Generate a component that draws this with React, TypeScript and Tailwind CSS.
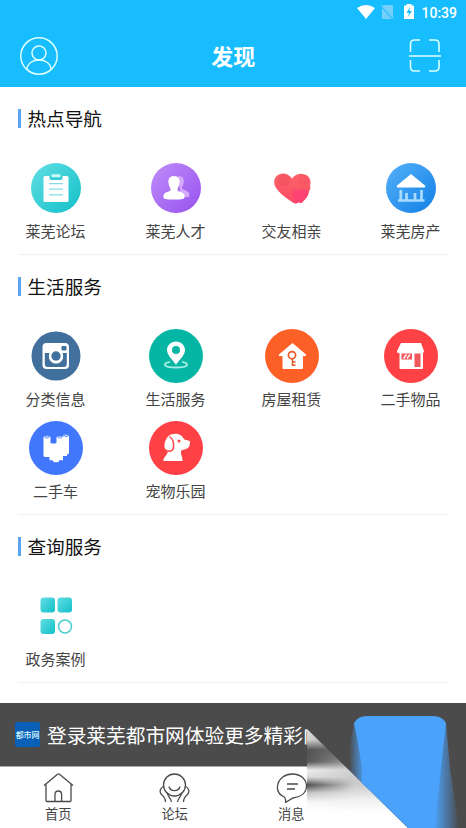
import type { ReactNode } from 'react';

type Item = { label: string; icon: ReactNode };

function Disc({ color, children, r = 27 }: { color: string; children: ReactNode; r?: number }) {
  return (
    <svg viewBox="0 0 56 56" className="size-14 shrink-0">
      <circle cx="28" cy="28" r={r} fill={color} />
      {children}
    </svg>
  );
}

const hot: Item[] = [
  {
    label: '莱芜论坛',
    icon: (
      <Disc color="url(#teal)" r={25}>
        <rect x="15.500" y="16" width="25" height="26" rx="1.500" fill="#fff" />
        <path d="M21.500 16v2q0 2 2 2h9q2 0 2-2v-2z" fill="#38cdd6" />
        <rect x="23.500" y="14.300" width="9" height="3" rx="1" fill="#c8fbfb" />
        <path d="M21 23.700h14M21 29.200h14M21 34.800h14" stroke="#85dfe2" strokeWidth="1.200" />
      </Disc>
    ),
  },
  {
    label: '莱芜人才',
    icon: (
      <Disc color="url(#violet)" r={25}>
        <path d="M30 16c6 0 7 4 5 9-2 4-1 4 2 5 4 2 5 3 4 7h-8z" fill="#d3a9fb" />
        <path d="M26 16c4.500 0 6 3 5.500 7-.3 3-1.500 4-2 6-.3 2 1 2 3.500 3 3 1.300 4 3 3.500 5.500-.3 1.500-2 2-10.500 2s-10-.5-10.500-2c-.5-2.500.5-4.200 3.500-5.500 2.500-1 3.800-1 3.500-3-.5-2-1.700-3-2-6-.5-4 1-7 5.500-7z" fill="#fff" />
      </Disc>
    ),
  },
  {
    label: '交友相亲',
    icon: (
      <svg viewBox="0 0 56 56" className="size-14 shrink-0">
        <path d="M28 18.500c4-6 12-6 16-2 3 3 3 6 2 9 .8 2 .2 4.500-1 6-.5 5-4 8.500-8 12l-2-1.500-2.500 1.500h-2C23 39 15 33 11.500 27c-2-4-1.800-8 1-11 4-4 11.500-3.500 15.500 2.500z" fill="url(#heart)" />
        <circle cx="20" cy="20" r="6" fill="#ea4358" opacity=".35" />
        <circle cx="39.500" cy="20.500" r="6" fill="#fa5265" opacity=".5" />
        <path d="M36 31c-3-3-8-.5-7.500 4 .3 4 3.500 6 6 8 4-2 8.500-5 10-11-3-3.500-7-3.500-8.500-1z" fill="#fd3f79" opacity=".75" />
      </svg>
    ),
  },
  {
    label: '莱芜房产',
    icon: (
      <Disc color="url(#blue)" r={25}>
        <path d="M28 14 42 25.500q1 2-1.500 2h-25q-2.500 0-1.500-2z" fill="#fff" />
        <path d="M17.800 30v10M23.500 33v7M32 33v7M38.500 30v10" stroke="#a7daff" strokeWidth="2.800" />
        <path d="M15 40.500h26.500" stroke="#a7daff" strokeWidth="2.500" />
      </Disc>
    ),
  },
];

const life: Item[] = [
  {
    label: '分类信息',
    icon: (
      <Disc color="#40709b" r={24.5}>
        <rect x="14.500" y="15" width="26.500" height="26" rx="4" fill="#fff" />
        <path d="M16.800 25h5.200a7 7 0 1 0 12 0h4.800v11q0 3-3 3h-16q-3 0-3-3z" fill="#40709b" />
        <circle cx="28" cy="28" r="7.200" fill="#fff" />
        <circle cx="28" cy="28" r="4.700" fill="#40709b" />
        <rect x="33.500" y="18" width="5" height="4.500" rx="1" fill="#40709b" />
      </Disc>
    ),
  },
  {
    label: '生活服务',
    icon: (
      <Disc color="#06b6a5">
        <path d="M28 13.500c-5 0-9 3.700-9 8.500 0 5.500 6.500 10.500 9 15 2.500-4.500 9-9.500 9-15 0-4.800-4-8.500-9-8.500zm0 4.500a4 4 0 1 1 0 8 4 4 0 0 1 0-8z" fill="#fff" fillRule="evenodd" />
        <path d="M22 33.800c-8 1.500-7 5.700 6 5.700s14-4.200 6-5.700" fill="none" stroke="#a5eee5" strokeWidth="1.800" />
      </Disc>
    ),
  },
  {
    label: '房屋租赁',
    icon: (
      <Disc color="#fd6026">
        <path d="M28.500 15 42 26.500q.5 1.500-1 1.500h-2v12q0 1-1 1H19.500q-1 0-1-1V28H16q-2 0-1-1.500z" fill="#fff" />
        <circle cx="28" cy="27.200" r="3.600" fill="none" stroke="#e45a2b" strokeWidth="1.700" />
        <path d="M28.500 31v7M29 34h2.500M29 37.300h2.500" stroke="#e45a2b" strokeWidth="1.500" />
      </Disc>
    ),
  },
  {
    label: '二手物品',
    icon: (
      <Disc color="#fd4144">
        <path d="M18 15h20l3 8q0 2-1.500 2h-24q-2 0-1.500-2z" fill="#fff" />
        <rect x="16.500" y="23" width="23.500" height="18" rx="1" fill="#fff" />
        <path d="M18.500 25.500H29v6H18.500zM31.500 25.500h6V39h-6z" fill="#f2575a" />
        <path d="m20.500 30.500 3-4M24 30.500l3-4" stroke="#fff" strokeWidth="1.300" />
      </Disc>
    ),
  },
  {
    label: '二手车',
    icon: (
      <Disc color="#4077fd">
        <path d="M15.500 17v18.500q0 1.500 2.500 1.500h3.500v3.300h3.200q0 2 3.300 2t3.300-2H35V36h4V34.500q2-.3 2-1.500V16q-2-2.200-5.500-1v2q-3-2-7 0v6q-3 1-6 0V17q-3-3-7 0z" fill="#fff" />
        <g fill="none" stroke="#4077fd" strokeWidth=".8">
          <ellipse cx="19" cy="17" rx="2.200" ry="1" />
          <ellipse cx="31.700" cy="17" rx="2.200" ry="1" />
          <ellipse cx="38.200" cy="15.700" rx="1.800" ry=".9" />
          <ellipse cx="25.500" cy="20.500" rx="2.200" ry="1.200" />
        </g>
      </Disc>
    ),
  },
  {
    label: '宠物乐园',
    icon: (
      <Disc color="#fd4144">
        <path d="M20.500 16c4.500-3.800 13-3 15 2.500 1.500 2.300 6 1.500 6.500 3 0 2-.5 4.500-1.500 6-2.500 2.500-7 1.500-7.500 4-.3 4 2 5.500 1.500 9.500h-19c-.8-3 3-5 4-8 .7-2-1.500-2.500-2.500-4.500-1.500-3 0-9 3.500-12.500z" fill="#fff" />
        <path d="M21.500 16.500c3.500 2.500 4.500 7 4 11-.5 4-5 4.500-7.500 2.500" fill="none" stroke="#fd4144" strokeWidth="1.500" />
        <circle cx="31" cy="21" r="1.500" fill="#fd4144" />
      </Disc>
    ),
  },
];

const query: Item[] = [
  {
    label: '政务案例',
    icon: (
      <svg viewBox="0 0 56 56" className="size-14 shrink-0">
        <rect x="12.500" y="9.500" width="14.500" height="15" rx="3" fill="url(#teal)" />
        <rect x="29.500" y="9.500" width="14.500" height="15" rx="3" fill="url(#teal)" />
        <rect x="12.500" y="31" width="14.500" height="15" rx="3" fill="url(#teal)" />
        <circle cx="37" cy="38.500" r="6.500" fill="none" stroke="#49cfce" strokeWidth="1.500" />
      </svg>
    ),
  },
];

function Section({ title, items, spacing }: { title: string; items: Item[]; spacing: string }) {
  return (
    <section className={`mx-[18px] border-b border-[#f1f1f1] ${spacing}`}>
      <div className="flex h-[28px] items-center">
        <span className="h-[19px] w-[2.500px] bg-[#5aa5ee]" />
        <h2 className="ml-[7px] text-[18.600px] leading-7 text-[#111]">{title}</h2>
      </div>
      <div className="mr-[7px] ml-[7px] mt-[28px] grid grid-cols-[120px_116px_119px_60px] gap-y-2">
        {items.map((item) => (
          <div key={item.label} className="flex h-[84px] w-[61px] flex-col items-center">
            {item.icon}
            <span className="mt-1 text-[15px] leading-[22px] whitespace-nowrap text-[#444]">{item.label}</span>
          </div>
        ))}
      </div>
    </section>
  );
}

function Gradients() {
  return (
    <svg className="absolute size-0">
      <defs>
        <linearGradient id="teal" x2="1" y2="1"><stop stopColor="#61dfe4" /><stop offset="1" stopColor="#13bfc8" /></linearGradient>
        <linearGradient id="violet" x2="1" y2="1"><stop stopColor="#bf8df9" /><stop offset="1" stopColor="#9751ee" /></linearGradient>
        <linearGradient id="blue" x2="1" y2="1"><stop stopColor="#55b1f8" /><stop offset="1" stopColor="#117fe6" /></linearGradient>
        <linearGradient id="heart" x2="0" y2="1"><stop stopColor="#fb6568" /><stop offset="1" stopColor="#fb4965" /></linearGradient>
      </defs>
    </svg>
  );
}

const tabs: Item[] = [
  {
    label: '首页',
    icon: <path d="M1 12.500 14.500 1.200Q15.500.5 16.500 1.200L30 12.500M3 11v16.500q0 1 1 1h23q1 0 1-1V11M12 28.500v-7q0-3.500 3.300-3.500t3.300 3.500v7" />,
  },
  {
    label: '论坛',
    icon: (
      <>
        <circle cx="15.500" cy="12" r="11" />
        <path d="M10 13.500c1.500 5.500 9.500 5.500 11 0M5 13c-4 2-5 5.500-2.500 8.500 2.500 2 4 4 4 7.500M8.500 19.500c-1 3 3.500 5 4 9.500M26 13c4 2 5 5.500 2.500 8.500-2.500 2-4 4-4 7.500M22.500 19.500c1 3-3.500 5-4 9.500" />
      </>
    ),
  },
  {
    label: '消息',
    icon: <path d="M8.500 24c-6-2.500-7.500-7-7-11 1-8 8-12 15-12 9 0 14 6 14 12 0 7-6 11-13.500 12L9.500 29.500q.8-2-1-5.500M11 11h11M11 16h8" />,
  },
];

function FloatingPanel() {
  return (
    <svg viewBox="0 0 160 125" className="pointer-events-none absolute top-0 right-0 h-[125px] w-[160px]">
      <defs>
        <linearGradient id="smear" x2="0" y2="1">
          <stop offset="0" stopColor="#ddd" /><stop offset=".12" stopColor="#d2d2d2" /><stop offset=".22" stopColor="#515151" />
          <stop offset=".34" stopColor="#555" /><stop offset=".42" stopColor="#ededed" /><stop offset=".49" stopColor="#ddd" />
          <stop offset=".57" stopColor="#4b4b4b" /><stop offset=".65" stopColor="#c5c5c5" /><stop offset=".74" stopColor="#f5f5f5" /><stop offset=".84" stopColor="#fff" />
        </linearGradient>
        <linearGradient id="smearSoft" x2="0" y2="1">
          <stop offset="0" stopColor="#c4c4c4" /><stop offset=".2" stopColor="#777" /><stop offset=".3" stopColor="#8c8c8c" />
          <stop offset=".42" stopColor="#cfcfcf" /><stop offset=".56" stopColor="#cacaca" /><stop offset=".72" stopColor="#f1f1f1" /><stop offset=".84" stopColor="#fff" />
        </linearGradient>
        <linearGradient id="near" gradientUnits="userSpaceOnUse" x1="0" x2="48" y1="0" y2="0"><stop stopColor="#fff" /><stop offset="1" stopColor="#fff" stopOpacity="0" /></linearGradient>
        <mask id="nearMask"><rect width="160" height="125" fill="url(#near)" /></mask>
        <linearGradient id="fadeLeft" gradientUnits="userSpaceOnUse" x1="43" x2="59" y1="0" y2="0"><stop stopColor="#4ba2fb" stopOpacity="0" /><stop offset="1" stopColor="#4ba2fb" /></linearGradient>
        <linearGradient id="fadeRight" gradientUnits="userSpaceOnUse" x1="128" x2="153" y1="0" y2="0"><stop stopColor="#4ba2fb" /><stop offset="1" stopColor="#4ba2fb" stopOpacity="0" /></linearGradient>
        <clipPath id="upper"><path d="M0 25 102 125H160V0H0Z" /></clipPath>
        <filter id="soft"><feGaussianBlur stdDeviation=".6" /></filter>
      </defs>
      <path d="M1 25 102 125H1Z" fill="url(#smearSoft)" />
      <path d="M1 25 102 125H1Z" fill="url(#smear)" mask="url(#nearMask)" />
      <g clipPath="url(#upper)">
        <rect x="1" width="159" height="125" fill="#4b4b4b" />
        <path d="M48 20 41 60V85H70V20Z" fill="url(#fadeLeft)" />
        <path d="M128 20H140L144 65 153 125H126Z" fill="url(#fadeRight)" />
        <path d="M48 20Q52 13 61 13H127Q136 13 140 20L135 65 129 125H56L56 65 52 40Z" fill="#4ba2fb" filter="url(#soft)" />
      </g>
    </svg>
  );
}

export default function App() {
  return (
    <main className="flex h-[828px] w-[466px] flex-col overflow-hidden bg-white font-['Noto_Sans_CJK_SC',sans-serif]">
      <Gradients />
      <header className="h-[87px] shrink-0 bg-[#17bdff] text-white">
        <div className="flex h-[26px] items-center justify-end pr-[9px]">
          <svg viewBox="0 0 58 20" className="mr-[6.500px] h-[20px] w-[58px]">
            <path d="M0 5Q9-1 18 5L9 16Z" fill="#fff" />
            <path d="M28 2h8v12.500L25 3.500V3ZM25 5l10 11H25Z" fill="#76cffa" />
            <path d="m24 2 13 14" stroke="#76cffa" />
            <path d="M49.500 1h5v1.500h2.500V16H47V2.500h2.500z" fill="#fff" />
            <path d="m53 4-3.500 6H52l-1 4 4-6h-2.500z" fill="#17bdff" />
          </svg>
          <span className="font-[Roboto] text-[14px] leading-5 font-medium">10:39</span>
        </div>
        <div className="flex h-[60px] items-center justify-between pr-[24px] pl-[18.500px]">
          <svg viewBox="0 0 40 40" className="size-[40px] fill-none stroke-[#dcffff] stroke-[1.500]">
            <circle cx="20" cy="20" r="18.200" /><circle cx="20" cy="17" r="7" /><path d="M8 33c1-12 23-12 24 0" />
          </svg>
          <h1 className="-mt-[3px] text-[22px] leading-8 font-bold">发现</h1>
          <svg viewBox="0 0 34 34" className="size-[34px] fill-none stroke-[#dcffff] stroke-[1.600]">
            <path d="M2.500 13V5q0-4 4-4H12M21 1h6q4 0 4 4v8M31 21v7q0 4-4 4h-6M12 32H6.500q-4 0-4-4v-7M1 17h32" />
          </svg>
        </div>
      </header>

      <div className="h-[616px] shrink-0">
        <Section title="热点导航" items={hot} spacing="h-[168px] pt-[17px]" />
        <Section title="生活服务" items={life} spacing="h-[260px] pt-[17px]" />
        <Section title="查询服务" items={query} spacing="h-[168px] pt-[17px]" />
      </div>

      <footer className="relative h-[125px] shrink-0">
        <div className="flex h-[63px] items-center bg-[#4b4b4b] pl-[15px]">
          <div className="flex size-[25px] items-center justify-center rounded-[2px] bg-[#0960b6] text-[8px] leading-none font-medium tracking-[-0.200px] whitespace-nowrap text-[#d8f7ff]">都市网</div>
          <span className="ml-[7px] text-[19.700px] leading-7 whitespace-nowrap text-white">登录莱芜都市网体验更多精彩内</span>
        </div>
        <nav className="grid grid-cols-4 border-t border-[#aaa] pt-[6px]">
          {tabs.map((tab) => (
            <div key={tab.label} className="flex flex-col items-center">
              <svg viewBox="0 0 31 30" className="h-[30px] w-[31px] fill-none stroke-[#4a4a4a] stroke-[1.300]">{tab.icon}</svg>
              <span className="mt-[2px] text-[13.200px] leading-[18px] text-[#444]">{tab.label}</span>
            </div>
          ))}
        </nav>
        <FloatingPanel />
      </footer>
    </main>
  );
}
